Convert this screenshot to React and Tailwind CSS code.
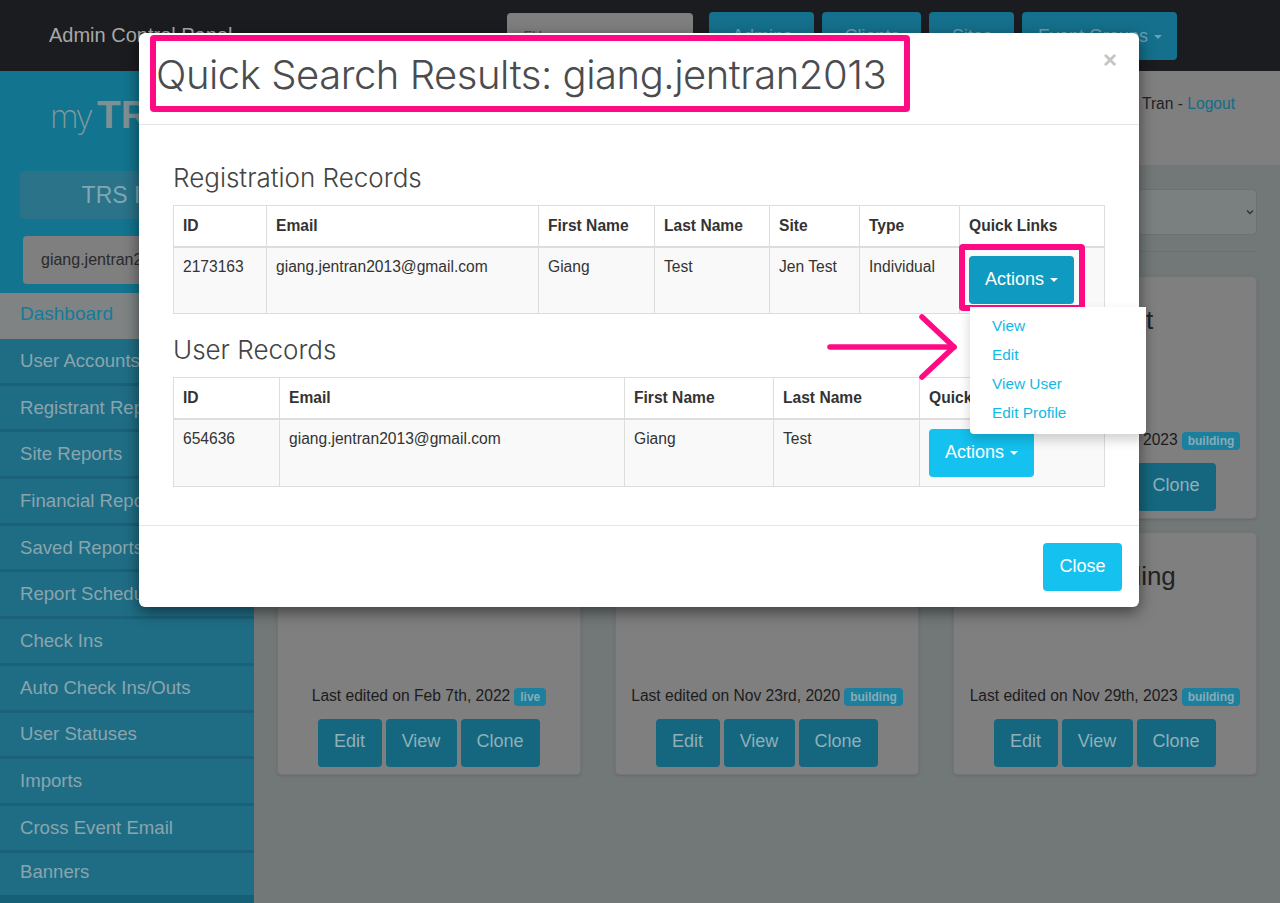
const menu = ['User Accounts', 'Registrant Reports', 'Site Reports', 'Financial Reports', 'Saved Reports', 'Report Schedules', 'Check Ins', 'Auto Check Ins/Outs', 'User Statuses', 'Imports', 'Cross Event Email']

const cards = [
  [{ title: 'Jen Test', date: 'Last edited on Feb 7th, 2022', badge: 'live' }, { title: 'Jen Test', date: 'Last edited on Nov 23rd, 2020', badge: 'building' }, { title: 'Jen Test', date: 'Last edited on Nov 29th, 2023', badge: 'building' }],
  [{ title: 'Jen Building', date: 'Last edited on Feb 7th, 2022', badge: 'live' }, { title: 'Jen Building', date: 'Last edited on Nov 23rd, 2020', badge: 'building' }, { title: 'Jen Building', date: 'Last edited on Nov 29th, 2023', badge: 'building' }],
]

const SiteCard = ({ card }) => (
  <div className="flex h-[243px] w-[304px] flex-col items-center rounded border border-[#727676] bg-[#7f7f7f] px-2 pb-[7px] shadow-sm">
    <div className="mt-[25px] text-[26px] leading-9 text-[#222]">{card.title}</div>
    <div className="mt-auto flex items-center gap-1 text-[15.6px] leading-5 whitespace-nowrap text-[#1c1c1c]">
      {card.date}
      <span className="mt-[2px] rounded-sm bg-[#1c7f9d] px-1.5 py-px text-[12px] leading-[16px] font-bold text-[#86acb6]">{card.badge}</span>
    </div>
    <div className="-ml-px mt-[13px] flex gap-1 text-lg text-[#8fb0b8]">
      <span className="flex h-12 w-16 items-center justify-center rounded bg-[#15677f] pb-1">Edit</span>
      <span className="flex h-12 w-[71px] items-center justify-center rounded bg-[#15677f] pb-1">View</span>
      <span className="flex h-12 w-[79px] items-center justify-center rounded bg-[#15677f] pb-1">Clone</span>
    </div>
  </div>
)

const ActionsButton = ({ dark }) => (
  <button className={`flex h-12 w-[105px] items-center justify-center gap-1.5 rounded pb-0.5 text-lg text-white ${dark ? 'bg-[#0f9ac2]' : 'bg-[#14c1ef]'}`}>
    Actions
    <span className="mt-0.5 border-x-4 border-t-4 border-x-transparent border-t-white"></span>
  </button>
)

const RecordTable = ({ widths, heads, row, dark, rowHeight }) => (
  <table className="w-[931px] table-fixed border-collapse border border-[#ddd] text-[15.6px] text-[#333]">
    <colgroup>
      {widths.map((w, i) => <col key={i} style={{ width: w }} />)}
    </colgroup>
    <thead>
      <tr className="h-[41px]">
        {heads.map((h) => <th key={h} className="border border-b-2 border-[#ddd] px-[9px] pb-px text-left font-bold">{h}</th>)}
      </tr>
    </thead>
    <tbody>
      <tr className={`bg-[#f9f9f9] ${rowHeight}`}>
        {row.map((c, i) => <td key={i} className="border border-[#ddd] px-[9px] pt-[7px] align-top">{c}</td>)}
        <td className="border border-[#ddd] px-[9px] align-middle"><ActionsButton dark={dark} /></td>
      </tr>
    </tbody>
  </table>
)

const SearchModal = () => (
  <div className="absolute top-[33px] left-[139px] z-10 w-[1000px] rounded-md bg-white shadow-[0_5px_15px_rgba(0,0,0,0.5)]">
    <div className="flex h-[92px] items-center justify-between border-b border-[#e5e5e5] pr-[22px] pl-[17px]">
      <h1 className="mb-[7px] font-['Inter',sans-serif] text-[40px] leading-none font-light tracking-[-0.0115em] text-[#4a4c50]">Quick Search Results: giang.jentran2013</h1>
      <span className="mb-[38px] text-[24px] leading-none font-bold text-[#c5c5c5]">×</span>
    </div>
    <div className="px-[34px] pt-[35px] pb-[38px]">
      <h2 className="mb-[9px] font-['Inter',sans-serif] text-[26px] leading-9 font-light text-[#444]">Registration Records</h2>
      <RecordTable
        dark
        rowHeight="h-[67px]"
        widths={[93, 272, 116, 115, 90, 100, 145]}
        heads={['ID', 'Email', 'First Name', 'Last Name', 'Site', 'Type', 'Quick Links']}
        row={['2173163', 'giang.jentran2013@gmail.com', 'Giang', 'Test', 'Jen Test', 'Individual']}
      />
      <h2 className="mt-[18px] mb-[9px] font-['Inter',sans-serif] text-[26px] leading-9 font-light text-[#444]">User Records</h2>
      <RecordTable
        rowHeight="h-[68px]"
        widths={[106, 345, 149, 146, 185]}
        heads={['ID', 'Email', 'First Name', 'Last Name', 'Quick Links']}
        row={['654636', 'giang.jentran2013@gmail.com', 'Giang', 'Test']}
      />
    </div>
    <div className="flex h-[82px] items-center justify-end border-t border-[#e5e5e5] pr-[17px]">
      <button className="h-12 w-[79px] rounded bg-[#14c1ef] pb-0.5 text-lg text-white">Close</button>
    </div>

    {/* annotations and open menu */}
    <div className="absolute top-[2px] left-[11px] h-[77px] w-[760px] rounded-sm border-[6px] border-[#ff0a85]"></div>
    <div className="absolute top-[211px] left-[820px] h-[67px] w-[126px] rounded-sm border-[6px] border-[#ff0a85]"></div>
    <div className="absolute top-[274px] left-[831px] z-20 flex h-[127px] w-[176px] flex-col rounded-b bg-white pt-1 pl-[22px] text-[15.4px] leading-[29px] text-[#13b9e6] shadow-[0_6px_12px_rgba(0,0,0,0.18)]">
      <span>View</span>
      <span>Edit</span>
      <span>View User</span>
      <span>Edit Profile</span>
    </div>
    <svg className="absolute top-[281px] left-[686px] z-30" width="136" height="68" viewBox="0 0 136 68" fill="none" stroke="#ff0a85" strokeWidth="5.5" strokeLinecap="round" strokeLinejoin="round">
      <path d="M5 33H129" />
      <path d="M97 3L129 33L97 63" />
    </svg>
  </div>
)

export default function App() {
  return (
    <div className="relative h-[903px] w-[1280px] overflow-hidden bg-[#727878] font-['Liberation_Sans',Arial,sans-serif] text-base">
      <header className="flex h-[71px] items-center bg-[#1b1c1f] pl-[49px]">
        <span className="mb-0.5 text-xl whitespace-nowrap text-[#a8a8a8]">Admin Control Panel</span>
        <div className="ml-[275px] flex items-center">
          <div className="flex h-[46px] w-[186px] items-center rounded bg-[#7f7f7f] px-4 text-sm text-[#444]">FH</div>
          <div className="ml-[16px] flex gap-2 text-lg text-[#6aa2b3]">
            <span className="flex h-12 w-[105px] items-center justify-center rounded bg-[#14708c]">Admins</span>
            <span className="flex h-12 w-[99px] items-center justify-center rounded bg-[#14708c]">Clients</span>
            <span className="flex h-12 w-[85px] items-center justify-center rounded bg-[#14708c]">Sites</span>
            <span className="flex h-12 w-[155px] items-center justify-center gap-1.5 rounded bg-[#14708c]">
              Event Groups
              <span className="mt-0.5 border-x-4 border-t-4 border-x-transparent border-t-[#6aa2b3]"></span>
            </span>
          </div>
        </div>
      </header>

      <div className="flex h-[832px]">
        <aside className="flex w-[254px] shrink-0 flex-col bg-[#1f6d85]">
          <div className="h-[222px] bg-[#12748e] px-5">
            <div className="mt-[26px] ml-[30px] flex h-9 items-baseline leading-9">
              <span className="mb-[10px] font-['Inter',sans-serif] text-[33px] font-extralight tracking-[-0.08em] text-[#82999e]">my</span>
              <span className="ml-[6px] text-[39px] font-bold text-[#7f9094]">TRS</span>
            </div>
            <div className="mt-[38px] flex h-12 items-center justify-center rounded bg-[#2a7389] text-[23px] text-[#7fa8b4]">TRS Info</div>
            <div className="mt-[17px] ml-[3px] flex h-12 items-center rounded bg-[#7f7f7f] pl-[18px] whitespace-nowrap text-[#2a2a2a]">giang.jentran2013</div>
          </div>
          <div className="flex h-[46px] shrink-0 items-center bg-[#7f8384] pb-[3px] pl-5 text-[19px] text-[#127c9a]">Dashboard</div>
          {menu.map((m) => (
            <div key={m} className="flex h-[46.7px] shrink-0 items-center border-b-[3px] border-[#1a6179] pl-5 text-[18.6px] text-[#8aa5ad]">{m}</div>
          ))}
          <div className="flex h-[42px] items-center pb-1 pl-5 text-[18.6px] text-[#8aa5ad]">Banners</div>
          <div className="flex-1 bg-[#155f77]"></div>
        </aside>

        <main className="flex-1">
          <div className="flex h-[94px] justify-end bg-[#7f7f7f] pt-[21px] pr-[45px] text-[15.6px] text-[#222]">
            <span>Jen Tran - <span className="text-[#0f6d88]">Logout</span></span>
          </div>
          <div className="mx-[23px] mt-[24px] flex h-[46px] items-center justify-end rounded border border-[#6b7070] bg-[#7a7f7f] pr-[1px] text-[#333]">
            <svg width="10" height="10" viewBox="0 0 10 10" fill="none" stroke="#333" strokeWidth="1.4"><path d="M2 3.5L5 6.5L8 3.5" /></svg>
          </div>
          <div className="mx-[23px] mt-[16px] border-t border-[#6b7070]"></div>
          <div className="mt-[24px] flex flex-col gap-[13px] pl-[23px]">
            {cards.map((row, i) => (
              <div key={i} className="flex gap-[34px]">
                {row.map((c, j) => <SiteCard key={j} card={c} />)}
              </div>
            ))}
          </div>
        </main>
      </div>

      <SearchModal />
    </div>
  )
}
